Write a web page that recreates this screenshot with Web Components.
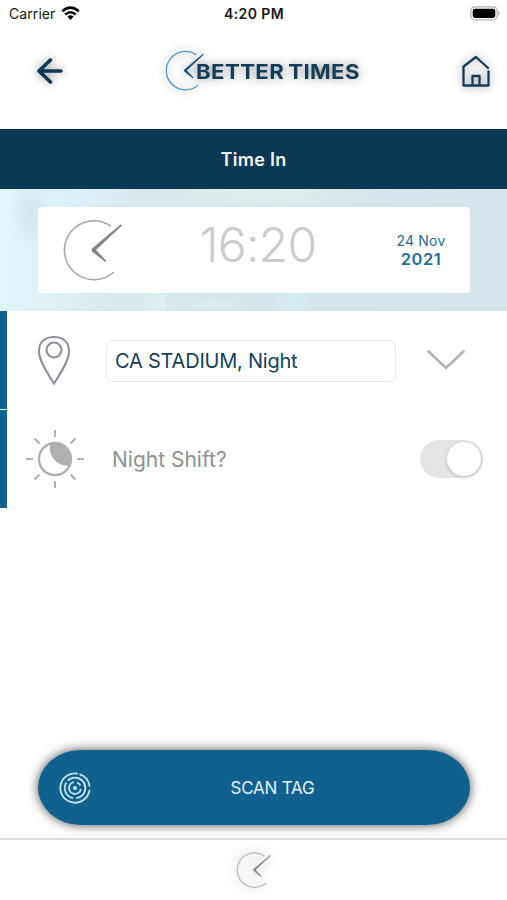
<!DOCTYPE html>
<html lang="en">
<head>
<meta charset="UTF-8">
<meta name="viewport" content="width=device-width, initial-scale=1.0">
<title>Better Times</title>
<style>
  body {
    margin: 0;
    background: #fff;
    font-family: Inter, "Liberation Sans", sans-serif;
  }
</style>
</head>
<body>
<time-app></time-app>

<script>
class ClockMark extends HTMLElement {
  constructor() {
    super();
    this.attachShadow({ mode: "open" });
  }

  connectedCallback() {
    const width = this.getAttribute("stroke") || "1.6";
    this.shadowRoot.innerHTML = `
      <style>
        :host { display: block; width: 60px; height: 62px; }
        svg { display: block; width: 100%; height: 100%; overflow: visible; }
        .ring { stroke: var(--ring, #a9a9a9); fill: none; }
        .hand { fill: var(--hand, #858585); }
      </style>
      <svg viewBox="0 0 60 62">
        <path class="ring" stroke-width="${width}" d="M46.2 6.6A29.5 29.5 0 1 0 49.3 53.5" stroke-linecap="round" />
        <path class="hand" d="M56.8 5.3L58 6.5L32 31L42.4 41.8L41.2 43L28 32.4Q26.8 30.8 28.3 29.3Z" />
      </svg>
    `;
  }
}
customElements.define("clock-mark", ClockMark);


class StatusBar extends HTMLElement {
  constructor() {
    super();
    this.attachShadow({ mode: "open" });
  }

  connectedCallback() {
    this.shadowRoot.innerHTML = `
      <style>
        :host {
          display: grid;
          grid-template-columns: 1fr auto 1fr;
          align-items: center;
          height: 28px;
          padding: 0 7px 2px 9px;
          box-sizing: border-box;
          font-size: 14px;
          color: #161616;
        }
        .carrier { display: flex; align-items: center; gap: 6px; letter-spacing: 0.08px; }
        .hora { font-weight: 600; margin-left: -1px; letter-spacing: 0.4px; }
        .battery { justify-self: end; }
        svg { display: block; }
      </style>
      <div class="carrier">
        <span>Carrier</span>
        <svg width="19" height="15" viewBox="0 0 19 15">
          <path d="M1.2 5.3Q9.5 -2 17.8 5.3M4.2 8.5Q9.5 4 14.8 8.5" fill="none" stroke="#000" stroke-width="2.5" />
          <path d="M6.3 10.6Q9.5 7.9 12.7 10.6L9.5 14Z" />
        </svg>
      </div>
      <div class="hora">4:20 PM</div>
      <svg class="battery" width="30" height="15" viewBox="0 0 30 15">
        <rect x="0.8" y="0.8" width="26.4" height="13" rx="4" fill="#fff" stroke="#b5b5b5" stroke-width="1.3" />
        <rect x="2.7" y="2.7" width="22.6" height="9.2" rx="2.3" />
        <path d="M28.4 5Q30.6 7.3 28.4 9.6Z" fill="#aaa" />
      </svg>
    `;
  }
}
customElements.define("status-bar", StatusBar);


class AppHeader extends HTMLElement {
  constructor() {
    super();
    this.attachShadow({ mode: "open" });
  }

  connectedCallback() {
    this.shadowRoot.innerHTML = `
      <style>
        :host {
          display: flex;
          justify-content: space-between;
          align-items: center;
          height: 101px;
          padding: 0 17px 16px 36px;
          box-sizing: border-box;
        }
        svg { display: block; overflow: visible; }
        svg, .logo { filter: drop-shadow(0 0 5px rgba(0, 0, 0, 0.45)); }
        .logo {
          display: flex;
          align-items: center;
          width: 193px;
          margin-left: -1px;
        }
        clock-mark {
          --ring: #4a97c8;
          --hand: #17527d;
          flex: none;
          width: 39px;
          height: 41px;
        }
        .nombre {
          margin-left: -9px;
          padding-top: 2px;
          font-size: 20px;
          font-weight: 700;
          letter-spacing: 0.35px;
          word-spacing: -1.5px;
          line-height: 24px;
          white-space: nowrap;
          color: #123d59;
          transform: scaleX(1.11);
          transform-origin: left;
        }
      </style>
      <svg width="27" height="26" viewBox="0 0 27 26">
        <path d="M14.5 2L3 13L14.5 24M3 13H25" fill="none" stroke="#0c3850" stroke-width="3.6" stroke-linecap="round" stroke-linejoin="round" />
      </svg>
      <div class="logo">
        <clock-mark stroke="1.9"></clock-mark>
        <span class="nombre">BETTER TIMES</span>
      </div>
      <svg width="28" height="32" viewBox="0 0 28 32">
        <path d="M26 13L14 2L1.5 11.5V30.5H26.5V16.5M10.5 30V21H17.5V30" fill="none" stroke="#123c58" stroke-width="2.3" stroke-linecap="round" stroke-linejoin="round" />
      </svg>
    `;
  }
}
customElements.define("app-header", AppHeader);


class TimeCard extends HTMLElement {
  constructor() {
    super();
    this.attachShadow({ mode: "open" });
  }

  connectedCallback() {
    this.shadowRoot.innerHTML = `
      <style>
        :host {
          display: block;
          height: 122px;
          padding: 18px 37px 18px 38px;
          box-sizing: border-box;
          background:
            radial-gradient(ellipse 22px 34px at 31px 25px, rgba(198, 222, 226, 0.6), transparent),
            radial-gradient(ellipse 64px 25px at 73px 4px, rgba(218, 241, 255, 0.9), transparent),
            radial-gradient(ellipse 120px 15px at 265px 5px, rgba(224, 238, 236, 0.9), transparent),
            radial-gradient(ellipse 24px 16px at 293px 114px, #d3eff5, transparent),
            linear-gradient(#dceff0, #dceff0) 145px 103px / 21px 19px no-repeat,
            radial-gradient(ellipse 28px 8px at 214px 115px, #dfedf1, transparent),
            linear-gradient(90deg, #dff7fb 0, #dff2f5 42px, #d8e8ec 120px, #d6e6eb 230px, #d4e6ec 100%);
        }
        .card {
          display: grid;
          grid-template-columns: 112px 1fr 98px;
          align-items: center;
          height: 86px;
          border-radius: 4px;
          background: #fff;
        }
        clock-mark { margin-left: 26px; }
        .hora {
          justify-self: center;
          margin: -10px 6px 0 0;
          font-size: 48px;
          font-weight: 350;
          line-height: 58px;
          letter-spacing: -0.7px;
          color: #cbcbcb;
        }
        .fecha {
          margin-top: -1px;
          text-align: center;
          color: #286b98;
          font-size: 14px;
          line-height: 19px;
          letter-spacing: 0.2px;
        }
        .fecha b { display: block; font-size: 16.5px; font-weight: 600; letter-spacing: 0.5px; }
      </style>
      <div class="card">
        <clock-mark></clock-mark>
        <div class="hora">${this.getAttribute("hora")}</div>
        <div class="fecha">${this.getAttribute("dia")}<b>${this.getAttribute("anio")}</b></div>
      </div>
    `;
  }
}
customElements.define("time-card", TimeCard);


class FormRow extends HTMLElement {
  constructor() {
    super();
    this.attachShadow({ mode: "open" });
  }

  connectedCallback() {
    this.shadowRoot.innerHTML = `
      <style>
        :host {
          display: grid;
          grid-template-columns: 95px 1fr 123px;
          align-items: center;
          height: 98px;
          box-sizing: border-box;
          border-left: 7px solid #11618f;
        }
        .icono, .accion { display: grid; justify-items: center; }
      </style>
      <div class="icono"><slot name="icon"></slot></div>
      <slot></slot>
      <div class="accion"><slot name="action"></slot></div>
    `;
  }
}
customElements.define("form-row", FormRow);


class ToggleSwitch extends HTMLElement {
  constructor() {
    super();
    this.attachShadow({ mode: "open" });
  }

  connectedCallback() {
    this.shadowRoot.innerHTML = `
      <style>
        :host {
          display: flex;
          justify-content: flex-end;
          width: 63px;
          height: 38px;
          padding: 2px;
          box-sizing: border-box;
          border-radius: 19px;
          background: #e5e5e6;
        }
        span {
          width: 34px;
          height: 34px;
          border-radius: 50%;
          background: #fff;
          box-shadow: 0 1px 4px rgba(0, 0, 0, 0.18);
        }
      </style>
      <span></span>
    `;
  }
}
customElements.define("toggle-switch", ToggleSwitch);


class ScanButton extends HTMLElement {
  constructor() {
    super();
    this.attachShadow({ mode: "open" });
  }

  connectedCallback() {
    this.shadowRoot.innerHTML = `
      <style>
        :host { display: block; }
        button {
          display: grid;
          grid-template-columns: 1fr auto 1fr;
          align-items: center;
          width: 432px;
          height: 75px;
          padding: 0 0 0 20px;
          border: 0;
          border-radius: 43px / 37.5px;
          background: #11618f;
          box-shadow: 0 0 11px rgba(0, 0, 0, 0.7);
          color: #e3f4fc;
          font: 400 17px Inter, "Liberation Sans", sans-serif;
        }
        span { margin-left: 17px; letter-spacing: -0.2px; }
      </style>
      <button>
        <svg width="34" height="34" viewBox="-17 -17 34 34" fill="none" stroke="#c5e5f5" stroke-width="1.8">
          <circle r="14.7" stroke-dasharray="17 3 70 2.36" transform="rotate(-72)" />
          <circle r="10.3" stroke-dasharray="39 3 20 2.72" transform="rotate(-135)" />
          <path d="M-1 -5.8A5.9 5.9 0 1 0 5.8 1" />
          <path d="M2 -5.5A5.9 5.9 0 0 1 5.3 -2.5" />
          <circle r="1.2" fill="#c5e5f5" />
        </svg>
        <span><slot></slot></span>
      </button>
    `;
  }
}
customElements.define("scan-button", ScanButton);


class TimeApp extends HTMLElement {
  constructor() {
    super();
    this.attachShadow({ mode: "open" });
  }

  connectedCallback() {
    this.shadowRoot.innerHTML = `
      <style>
        :host {
          display: flex;
          flex-direction: column;
          width: 507px;
          height: 900px;
          overflow: hidden;
          background: #fff;
        }
        h1 {
          display: grid;
          place-items: center;
          height: 60px;
          margin: 0;
          background: #0c3852;
          color: #f3f8fa;
          font-size: 18px;
          font-weight: 600;
          letter-spacing: 0.3px;
        }
        .filas { display: grid; gap: 1px; }
        .campo {
          width: 290px;
          height: 42px;
          margin: 1px 0 0 4px;
          padding-left: 8px;
          box-sizing: border-box;
          border: 1px solid #ececec;
          border-radius: 6px;
          color: #153f5b;
          font-size: 20px;
          line-height: 41px;
          letter-spacing: -0.22px;
        }
        .etiqueta { margin-left: 10px; color: #8e9192; font-size: 21px; }
        svg { display: block; }
        .pin { margin-right: 2px; }
        .flecha { margin-right: 23px; }
        toggle-switch { margin-right: 13px; }
        scan-button { margin: auto 0 13px 38px; }
        footer {
          display: grid;
          justify-content: center;
          height: 62px;
          padding: 11px 0 0 1px;
          box-sizing: border-box;
          border-top: 2px solid #dedede;
        }
        footer clock-mark {
          width: 35px;
          height: 38px;
          --ring: #b9b9b9;
          --hand: #8a8a8a;
          filter: drop-shadow(0 0 6px rgba(0, 0, 0, 0.4));
        }
      </style>

      <status-bar></status-bar>
      <app-header></app-header>
      <h1>Time In</h1>
      <time-card hora="16:20" dia="24 Nov" anio="2021"></time-card>

      <div class="filas">
        <form-row>
          <svg slot="icon" class="pin" width="34" height="50" viewBox="0 0 34 50" fill="none" stroke="#8f8c98" stroke-width="2">
            <path d="M17 48.5C11 39 2 26 2 16.5C2 6 9 2 17 2S32 6 32 16.5C32 26 23 39 17 48.5Z" />
            <circle cx="17" cy="15" r="7.5" />
          </svg>
          <div class="campo">CA STADIUM, Night</div>
          <svg slot="action" class="flecha" width="38" height="20" viewBox="0 0 38 20">
            <path d="M1.5 1.5L19 18L36.5 1.5" fill="none" stroke="#b3b3b3" stroke-width="2.6" stroke-linecap="round" />
          </svg>
        </form-row>
        <form-row>
          <svg slot="icon" width="58" height="58" viewBox="-29 -29 58 58" fill="none" stroke="#b0b0b0" stroke-width="2">
            <circle r="16" stroke-width="2.4" />
            <path d="M-4.5 -15.5A17.5 17.5 0 0 0 15 6.5A16.3 16.3 0 0 0 -4.5 -15.5Z" fill="#b0b0b0" stroke="none" />
            <path d="M0 -29V-22M0 22V29M-29 0H-22M22 0H29M-20.5 -20.5L-15.5 -15.5M15.5 15.5L20.5 20.5M-20.5 20.5L-15.5 15.5M15.5 -15.5L20.5 -20.5" />
          </svg>
          <div class="etiqueta">Night Shift?</div>
          <toggle-switch slot="action"></toggle-switch>
        </form-row>
      </div>

      <scan-button>SCAN TAG</scan-button>
      <footer><clock-mark stroke="2.2"></clock-mark></footer>
    `;
  }
}
customElements.define("time-app", TimeApp);
</script>
</body>
</html>
